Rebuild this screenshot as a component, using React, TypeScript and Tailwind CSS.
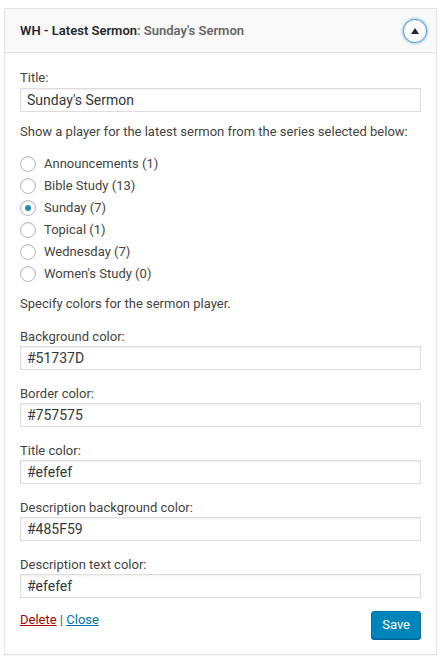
import { useState } from 'react';

type Series = { id: string; label: string; count: number };

const series: Series[] = [
  { id: 'announcements', label: 'Announcements', count: 1 },
  { id: 'bible-study', label: 'Bible Study', count: 13 },
  { id: 'sunday', label: 'Sunday', count: 7 },
  { id: 'topical', label: 'Topical', count: 1 },
  { id: 'wednesday', label: 'Wednesday', count: 7 },
  { id: 'womens-study', label: "Women's Study", count: 0 },
];

const colorFields = [
  { id: 'bg', label: 'Background color:', value: '#51737D' },
  { id: 'border', label: 'Border color:', value: '#757575' },
  { id: 'title', label: 'Title color:', value: '#efefef' },
  { id: 'descBg', label: 'Description background color:', value: '#485F59' },
  { id: 'descText', label: 'Description text color:', value: '#efefef' },
];

function Field({ label, value }: { label: string; value: string }) {
  return (
    <div className="mt-[14px] first:mt-0">
      <label className="block h-[19px] text-[13px] leading-[19px] text-[#444]">{label}</label>
      <input
        defaultValue={value}
        className="block h-6 w-full border border-[#ddd] bg-white px-[6px] text-[14px] text-[#32373c] shadow-[inset_0_1px_2px_rgba(0,0,0,0.07)] outline-none"
      />
    </div>
  );
}

export default function App() {
  const [selected, setSelected] = useState('sunday');

  return (
    <div className="min-h-[663px] bg-white px-1 pt-2 font-['Roboto',sans-serif]">
      <div className="border border-[#e5e5e5] bg-white shadow-[0_1px_1px_rgba(0,0,0,0.04)]">
        {/* Header */}
        <div className="flex h-[44px] items-center justify-between border-b border-[#e5e5e5] bg-[#f9f9f9] pl-[15px] pr-[9px]">
          <h3 className="text-[13px] font-semibold text-[#23282d]">
            WH - Latest Sermon<span className="text-[#666]">: Sunday's Sermon</span>
          </h3>
          <button className="flex h-[24px] w-[24px] items-center justify-center rounded-full border-[1.5px] border-[#5b9dd9] bg-white shadow-[0_0_3px_rgba(30,140,190,0.8)]">
            <svg width="8" height="6" viewBox="0 0 8 6">
              <path d="M4 0 L8 6 L0 6 Z" fill="#23282d" />
            </svg>
          </button>
        </div>

        {/* Body */}
        <div className="px-[15px] pb-[15px] pt-[16px] text-[13px] text-[#444]">
          <div>
            <label className="block h-[18px] text-[13px] leading-[18px]">Title:</label>
            <input
              defaultValue="Sunday's Sermon"
              className="mt-px block h-6 w-full border border-[#ddd] bg-white px-[6px] text-[14px] text-[#32373c] shadow-[inset_0_1px_2px_rgba(0,0,0,0.07)] outline-none"
            />
          </div>

          <p className="mt-[11px] leading-[18px]">
            Show a player for the latest sermon from the series selected below:
          </p>

          <div className="mt-3">
            {series.map((s) => (
              <label key={s.id} className="flex h-[22px] cursor-pointer items-center">
                <span
                  onClick={() => setSelected(s.id)}
                  className="flex h-4 w-4 items-center justify-center rounded-full border border-[#b4b9be] bg-white shadow-[inset_0_1px_2px_rgba(0,0,0,0.1)]"
                >
                  {selected === s.id && <span className="h-[6px] w-[6px] rounded-full bg-[#1e8cbe]" />}
                </span>
                <span className="ml-2">
                  {s.label} ({s.count})
                </span>
              </label>
            ))}
          </div>

          <p className="mt-[10px] leading-[18px]">Specify colors for the sermon player.</p>

          <div className="mt-[14px]">
            {colorFields.map((f) => (
              <Field key={f.id} label={f.label} value={f.value} />
            ))}
          </div>

          <div className="mt-[13px] flex items-start justify-between">
            <div className="leading-[18px]">
              <a href="#" className="text-[#a00] underline">Delete</a>
              <span className="text-[#555]"> | </span>
              <a href="#" className="text-[#0073aa] underline">Close</a>
            </div>
            <button className="h-[28px] rounded-[3px] border border-[#0073aa] bg-[#0085ba] px-[10px] text-[13px] text-white shadow-[0_1px_0_#006799]">
              Save
            </button>
          </div>
        </div>
      </div>
    </div>
  );
}
